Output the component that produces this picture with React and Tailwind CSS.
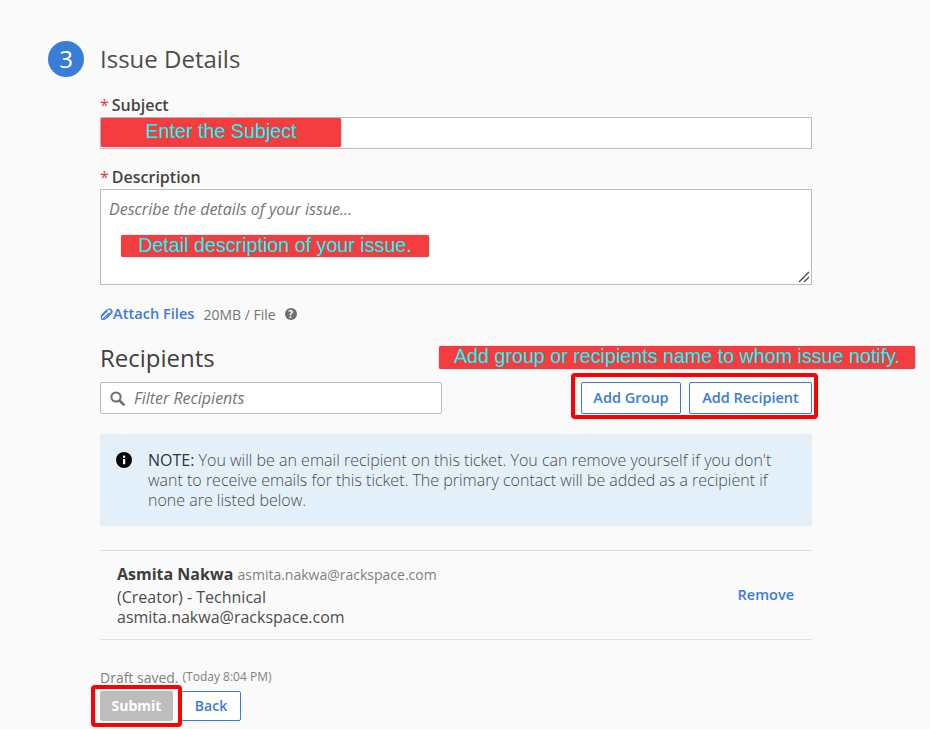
import React from 'react';

const Note = ({ className, children }) => (
  <div className={`absolute flex items-center justify-center rounded-[2px] bg-[#f53c3e] pb-[1px] font-['Liberation_Sans',sans-serif] text-[19.7px] leading-none text-[#0ff] shadow-[0_0_1px_#555] ${className}`}>
    {children}
  </div>
);

const Label = ({ children }) => (
  <label className="block text-[16px] font-semibold leading-[22px] text-[#444]">
    <span className="mr-[3px] font-normal text-[#e53935]">*</span>
    {children}
  </label>
);

const PaperClip = () => (
  <svg viewBox="0 0 13 12" className="h-[12px] w-[13px] shrink-0 text-[#3a7dd6]" fill="none" stroke="currentColor" strokeWidth="1.1" strokeLinecap="round">
    <path d="M1.2 7.6 6.8 2a2.5 2.5 0 0 1 4 3L5 10.8a2 2 0 0 1-3.3-2.5L7 3" />
    <path d="M3.4 10.6 9 5" />
    <path d="M9.5 1.4a2.4 2.4 0 0 1 2.6 2.9L6.7 10" />
  </svg>
);

const SearchIcon = () => (
  <svg viewBox="0 0 15 15" className="h-[15px] w-[15px] shrink-0 text-[#6e6e6e]" fill="none" stroke="currentColor">
    <circle cx="6" cy="6" r="4.6" strokeWidth="2" />
    <path d="M9.6 9.6 13.6 13.6" strokeWidth="2.6" strokeLinecap="round" />
  </svg>
);

const ResizeGrip = () => (
  <svg viewBox="0 0 12 12" className="absolute bottom-[1px] right-[1px] h-3 w-3 text-[#444]" fill="none" stroke="currentColor" strokeWidth="1.2">
    <path d="M1 11 11 1" />
    <path d="M6 11l5-5" />
  </svg>
);

export default function App() {
  return (
    <div className="relative h-[729px] w-[930px] overflow-hidden bg-[#fafafa] font-['Open_Sans',sans-serif]">
      <div className="pl-[48px] pr-[118px] pt-[41px]">
        {/* Step header */}
        <div className="flex h-9 items-center">
          <div className="flex h-9 w-9 items-center justify-center rounded-full bg-[#3a7dd6] text-[24px] text-white">3</div>
          <h2 className="ml-4 text-[24px] font-normal text-[#4d4d4d]">Issue Details</h2>
        </div>

        <div className="ml-[52px]">
          {/* Subject */}
          <div className="mt-[17px]">
            <Label>Subject</Label>
            <input type="text" className="mt-[1px] block h-8 w-full border border-[#bdbdbd] bg-white" />
          </div>

          {/* Description */}
          <div className="mt-[17px]">
            <Label>Description</Label>
            <div className="relative mt-[1px] h-[96px] border border-[#bdbdbd] bg-white px-2 pt-[9px] text-[16px] italic leading-5 text-[#757575]">
              Describe the details of your issue...
              <ResizeGrip />
            </div>
          </div>

          {/* Attachments */}
          <div className="mt-[19px] flex h-5 items-center text-[14px]">
            <PaperClip />
            <a className="text-[14.6px] font-semibold text-[#3a7dd6]">Attach Files</a>
            <span className="ml-[9px] text-[#757575]">20MB / File</span>
            <span className="ml-[9px] flex h-3 w-3 items-center justify-center rounded-full bg-[#6e6e6e] text-[10px] font-bold leading-none text-white">?</span>
          </div>

          {/* Recipients */}
          <h3 className="mt-[17px] text-[24px] font-normal leading-[34px] text-[#404040]">Recipients</h3>
          <div className="mt-[7px] flex items-center justify-between">
            <div className="flex h-8 w-[342px] items-center rounded-[2px] border border-[#bdbdbd] bg-white pl-[9px]">
              <SearchIcon />
              <span className="ml-[9px] text-[16px] italic text-[#757575]">Filter Recipients</span>
            </div>
            <div className="flex gap-2">
              <button className="h-8 w-[100px] rounded-[2px] border border-[#3a7dd6] bg-white text-[14.5px] font-semibold text-[#3a7dd6]">Add Group</button>
              <button className="h-8 w-[123px] rounded-[2px] border border-[#3a7dd6] bg-white text-[14.5px] font-semibold text-[#3a7dd6]">Add Recipient</button>
            </div>
          </div>

          {/* Note */}
          <div className="mt-5 flex h-[92px] bg-[#e3f0fa] pl-4 pr-8 pt-4">
            <svg viewBox="0 0 16 16" className="mt-[2px] h-4 w-4 shrink-0">
              <circle cx="8" cy="8" r="8" fill="#0a0a0a" />
              <rect x="7" y="7" width="2.2" height="5.2" fill="#fff" />
              <rect x="7" y="3.6" width="2.2" height="2.2" fill="#fff" />
            </svg>
            <p className="ml-4 text-[16px] font-light leading-5 text-[#4a4a4a]">
              <span className="font-normal text-[#333]">NOTE:</span> You will be an email recipient on this ticket. You can remove yourself if you don't want to receive emails for this ticket. The primary contact will be added as a recipient if none are listed below.
            </p>
          </div>

          {/* Recipient row */}
          <div className="mt-6 flex h-[90px] items-center justify-between border-y border-[#e0e0e0] pl-[17px] pr-[18px]">
            <div className="text-[16px] leading-5 text-[#4d4d4d]">
              <div className="mb-[2px]">
                <span className="font-bold text-[#3d3d3d]">Asmita Nakwa</span>{' '}
                <span className="text-[14px] text-[#808080]">asmita.nakwa@rackspace.com</span>
              </div>
              <div>(Creator) - Technical</div>
              <div>asmita.nakwa@rackspace.com</div>
            </div>
            <a className="text-[14.5px] font-semibold text-[#3a7dd6]">Remove</a>
          </div>

          {/* Footer */}
          <div className="mt-[27px] flex h-[20px] items-center text-[14px] text-[#808080]">
            Draft saved.<span className="ml-1 text-[12px]">(Today 8:04 PM)</span>
          </div>
          <div className="mt-1 flex gap-2">
            <button className="h-[30px] w-[73px] rounded-[2px] bg-[#bdbdbd] pb-[2px] text-[14px] font-bold text-white">Submit</button>
            <button className="h-[30px] w-[60px] rounded-[2px] border border-[#3a7dd6] bg-white pb-[2px] text-[14px] font-semibold text-[#3a7dd6]">Back</button>
          </div>
        </div>
      </div>

      {/* Annotations drawn over the page */}
      <Note className="left-[101px] top-[118px] h-[29px] w-[240px]">Enter the Subject</Note>
      <Note className="left-[121px] top-[235px] h-[22px] w-[308px]">Detail description of your issue.</Note>
      <Note className="left-[439px] top-[346px] h-[23px] w-[476px]">Add group or recipients name to whom issue notify.</Note>
      <div className="absolute left-[571px] top-[373px] h-[46px] w-[247px] rounded-[4px] border-[4px] border-[#f00]" />
      <div className="absolute left-[91px] top-[685px] h-[42px] w-[91px] rounded-[4px] border-[4px] border-[#f00]" />
    </div>
  );
}
